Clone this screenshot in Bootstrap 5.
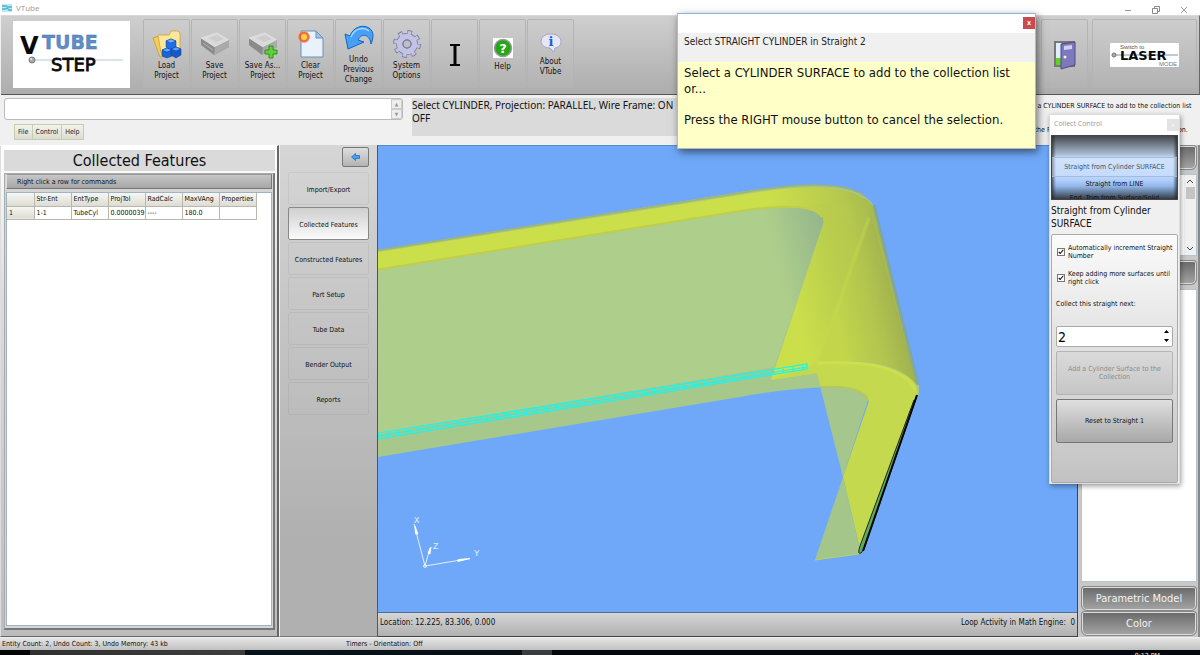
<!DOCTYPE html>
<html lang="en">
<head>
<meta charset="utf-8">
<meta name="viewport" content="width=device-width, initial-scale=1">
<title>VTube</title>
<link href="https://cdn.jsdelivr.net/npm/bootstrap@5.3.0/dist/css/bootstrap.min.css" rel="stylesheet">
<script src="https://cdn.jsdelivr.net/npm/bootstrap@5.3.0/dist/js/bootstrap.bundle.min.js"></script>
<style>
:root{--ui:"DejaVu Sans Condensed","Noto Sans",sans-serif}
body{font-family:var(--ui);font-size:7px;line-height:8px;color:#111;background:#f0f0f0}
button,input{font-family:inherit}
.app{height:100vh;overflow:hidden}
.titlebar{height:15px;background:#fff;color:#999;font:8px/15px "Open Sans",sans-serif;padding:0 2px 0 2px}
.titlebar .winbtn{border:0;background:none;width:28px;height:13px;padding:0}
.ribbon{height:80px;margin-left:1px;background:linear-gradient(#cfcfcf,#adadad);border-top:1px solid #d9d9d9;border-bottom:1px solid #555;border-right:1px solid #666;padding:3px 2px 0 12px}
.logo{width:117px;height:67px;background:#fff;margin:2px 13px 0 0}
.tool{width:47px;height:69px;border:1px solid #b4b4b4;border-radius:2px;background:linear-gradient(#cdcdcd,#b3b3b3);padding:2px 0 0;color:#111;font-size:8px;line-height:10px;margin-right:1px}
.tool svg{display:block}
.tool svg + span{margin-top:2px}
.lasercell{width:105px}
.inforow{height:50px;background:#f0f0f0}
.msgbox{width:399px;height:22px;margin:3px 0 0 4px;border:1px solid #bbb;border-radius:3px;background:#fff}
.msgbox input{border:0;width:100%;height:18px;background:transparent;font-size:8px;padding:0 4px}
.spin button{display:block;width:11px;height:10px;padding:0;border:1px solid #ccc;background:#eee;color:#999;font-size:5px;line-height:7px}
.menus{margin:4px 0 0 14px}
.menus button{height:16px;border:1px solid #c5cda9;background:linear-gradient(#f3f3ee,#dcdcd2);padding:0 3px;font-size:7px;line-height:12px;color:#222;margin-right:-1px}
.modebox{background:#dadada;height:38px;margin:3px 0 0 9px;font-family:"Noto Sans",sans-serif;font-size:10px;line-height:13px;padding-top:1px;white-space:nowrap}
.hintlabel{width:184px;padding:7px 2px 0 0;font-size:7px}
.hintlabel p{margin:0;white-space:nowrap}
.leftpanel{width:279px;border:1px solid #fff;border-left-color:#ddd;border-right:2px solid #666;border-bottom:1px solid #666;background:linear-gradient(#fff,#ddd 30%,#bcbcbc);padding:4px 2px 6px 3px}
.leftpanel h1{font-size:16px;line-height:21px;height:21px;background:#dadada;margin:0 0 2px;text-align:center;font-weight:400}
.gridbox{border:1px solid #aaa;border-right:2px solid #777;border-bottom:2px solid #777;background:#d5d5d5;padding:0 1px 2px}
.hintbar{height:15px;border:1px solid #777;border-left-color:#ddd;border-top-color:#999;background:linear-gradient(#c6c6c6,#a7a7a7);padding:3px 10px;margin-bottom:3px}
.sheet{background:#fff;border:1px solid #9fb3c5}
.sheet table{width:249px;table-layout:fixed;border-collapse:collapse;font-size:7px;line-height:8px}
.sheet th,.sheet td{height:13px;border:1px solid #b8b8b0;border-top:0;border-left:0;padding:1px 2px;font-weight:400;white-space:nowrap;overflow:hidden}
.sheet th{background:linear-gradient(#f7f7f3,#dcdcd3)}
.sidenav{width:99px;border-left:1px solid #eee;border-right:1px solid #555;border-bottom:1px solid #777;background:linear-gradient(#d6d6d6,#b0b0b0 80%,#b0b0b0);padding:2px 8px 0 8px}
.sidenav .back{width:27px;height:20px;border:1px solid #777;border-radius:2px;background:linear-gradient(#dedede,#b3b3b3);padding:0;margin-bottom:5px}
.sidenav .step{height:33px;border:1px solid #0000000d;border-radius:2px;background:transparent;padding:2px 0 0;color:#111;font-size:7px}
.sidenav .step.chosen{background:linear-gradient(#cfcfcf,#fafafa);border:1px solid #888}
.scene{background:#6fa8f8;border-top:1px solid #5a88c8;min-height:0}
.scene svg{display:block;width:100%;height:100%}
.locbar{height:25px;border-top:1px solid #4e6f9e;border-bottom:1px solid #444;background:linear-gradient(#d6d6d6,#b0b0b0);padding:4px 2px;font-size:8px;line-height:11px}
.rightcol{width:123px;border-left:1px solid #444;border-right:2px solid #888;background:#c8c8c8;padding:0 1px 1px 3px}
.sect{height:25px;border:1px solid #888;border-radius:3px 3px 6px 6px;box-shadow:inset 0 0 0 1px #ddd;background:linear-gradient(#696969,#a5a5a5);color:#f2f2f2;font:11px/20px "DejaVu Sans Condensed",sans-serif;padding:0}
.pane{background:#fff;border:1px solid #b5c4d0}
.listpane{height:82px}
.sbar{width:12px;background:#f0f0f0;color:#555}
.statusbar{height:13px;border-top:1px solid #eee;background:linear-gradient(#e6e6e6,#c0c0c0);font-size:7px;line-height:13px;padding:0 2px}
.statusbar .first{width:344px}
.taskbar{height:5px;background:linear-gradient(90deg,#050505 30px,#303030 30px,#3d3d3d 245px,#06131a 245px,#080f14 522px,#393d40 522px,#393d40 552px,#03080c 552px);color:#eee;font-size:7px;line-height:8px;padding:2px 40px 0 0;overflow:hidden}
.popup{position:absolute;top:13px;right:164px;width:359px;height:136px;border:1px solid #bcbca0;border-top-color:#8ab4e8;background:#ffffc8;box-shadow:2px 3px 8px #0008}
.popup .cap{height:19px;background:#fff}
.popup .cap button{width:12px;height:12px;margin-top:3px;border:0;background:#c84b50;color:#fff;padding:0;font:bold 7px/11px var(--ui)}
.popup .sub{height:29px;background:#f0f0f0;font-size:10px;line-height:15px;padding:1px 6px;color:#222}
.popup .msg{font-size:13px;line-height:16px;padding:3px 6px}
.popup .msg p{margin:0 0 15px}
.collect{position:absolute;top:114px;right:20px;width:131px;height:370px;background:#f0f0f0;border:1px solid #ddd;box-shadow:1px 2px 5px #0006;padding:0 1px}
.collect .cap{height:20px;margin:0 -1px;background:#fff;color:#999;font:7px/18px "Open Sans",sans-serif;padding-left:4px}
.collect .cap button{border:0;background:#e3e3e3;color:#fff;width:12px;height:12px;margin-top:4px;padding:0;font-size:6px;line-height:10px}
.drum{height:65px;border:1px solid #444;background:linear-gradient(90deg,#222a,transparent 4px,transparent calc(100% - 4px),#222a),linear-gradient(#44484f,#a9bbd0 18px,#cfe0f8 22px,#b5d2ff 43px,#94b8ea 50px,#333c48);text-align:center;line-height:14px;overflow:hidden;padding-top:21px}
.drum .picked{background:#d6e6ff66;border:1px solid #a6bbda;border-width:1px 0;line-height:18px;color:#456}
.collect h2{font-size:10px;line-height:13px;margin:4px 0 4px;font-weight:400}
.optbox{border:1px solid #aaa;border-radius:2px;background:linear-gradient(#fbfbfb,#c2c2c2);padding:9px 4px 0}
.optbox input[type=checkbox]{width:8px;height:8px;margin:4px 3px 0 1px;appearance:none;flex:none;border:1px solid #777;background:#fff}
.optbox input[type=checkbox]:checked{background:#fff url("data:image/svg+xml,%3Csvg xmlns='http://www.w3.org/2000/svg' viewBox='0 0 8 8'%3E%3Cpath d='M1 4l2 2 4-5' fill='none' stroke='%23111' stroke-width='1.5'/%3E%3C/svg%3E")}
.optbox label{font-size:7px;line-height:8px}
.optbox .nextlabel{margin:14px 0 18px}
.optbox .optrow{margin-bottom:10px}
.num{height:21px;border:1px solid #aaa;border-radius:2px;background:#fff}
.num input{border:0;background:none;width:90px;font-size:14px;line-height:18px;padding:0 1px}
.num button{display:block;border:0;background:none;height:9px;width:11px;padding:0}
.optbox .act{height:44px;border:1px solid #777;border-radius:2px;background:linear-gradient(#dfdfdf,#a8a8a8);padding:0 8px;font-size:7px;line-height:8px;color:#111}
.optbox .act:disabled{background:linear-gradient(#dadada,#c6c6c6);border-color:#b4b4b4;color:#8c8c8c}
</style>
</head>
<body>
<div class="app d-flex flex-column position-relative">
  <header class="titlebar d-flex align-items-center">
    <svg width="10" height="8" viewBox="0 0 10 8" class="me-1"><rect width="10" height="8" fill="#bfe7f4"/><path d="M0 2h4l2 1h4M0 5h3l2-1 2 2h3" stroke="#46b4d8" stroke-width="1.3" fill="none"/></svg>
    <span class="me-auto">VTube</span>
    <button class="winbtn" aria-label="Minimize"><svg width="8" height="8"><path d="M1 4.500h6" stroke="#999"/></svg></button>
    <button class="winbtn" aria-label="Restore"><svg width="8" height="8" fill="none" stroke="#888"><path d="M.5 2.500h5v5h-5zM2.500 2V.5h5v5H6"/></svg></button>
    <button class="winbtn" aria-label="Close"><svg width="8" height="8"><path d="M1 1l6 6M7 1L1 7" stroke="#999"/></svg></button>
  </header>

  <nav class="ribbon d-flex align-items-start">
    <div class="logo flex-shrink-0">
      <svg width="117" height="67" viewBox="0 0 117 67" role="img" aria-label="VTube Step">
        <path d="M20 39h90" stroke="#b5c9dd"/>
        <text x="7" y="33" font-family="DejaVu Sans" font-weight="bold" font-size="24" fill="#080808">V</text>
        <text x="29" y="28" font-family="DejaVu Sans" font-weight="bold" font-size="19" fill="#5f8dc8" stroke="#4673ad" stroke-width=".4">TUBE</text>
        <text x="38" y="50" font-family="DejaVu Sans" font-size="18" fill="#0b0b0b" stroke="#0b0b0b" stroke-width=".8">STEP</text>
        <circle cx="19" cy="39" r="3" fill="#aaa" stroke="#777"/><circle cx="18" cy="38" r="1" fill="#eee"/>
      </svg>
    </div>
    <button class="tool d-flex flex-column align-items-center justify-content-center">
      <svg width="30" height="30" viewBox="0 0 30 30"><path d="M1 9l6-2 2 1 9-2 3 21-13 1z" fill="#f1cf5c" stroke="#c99b2e" stroke-width=".8"/><path d="M6 6h11l2-4h7l2 2v20H9z" fill="#fbe79a" stroke="#cda23a" stroke-width=".8"/><g stroke="#0a3d98" stroke-width=".5"><path d="M14 12l5-2 5 2v6l-5 3-5-3z" fill="#1e6fe8"/><path d="M14 12l5-2 5 2-5 2z" fill="#6fb0ff"/><path d="M10 21l5-2 5 2v6l-5 2-5-2z" fill="#1a63d8"/><path d="M10 21l5-2 5 2-5 2z" fill="#62a6ff"/><path d="M19 20l5-2 5 2v6l-5 3-5-3z" fill="#1659c9"/><path d="M19 20l5-2 5 2-5 2z" fill="#5aa0fc"/></g></svg>
      <span>Load<br>Project</span></button>
    <button class="tool d-flex flex-column align-items-center justify-content-center">
      <svg width="30" height="30" viewBox="0 0 30 30"><path d="M1 9L17 4l12 7v7L14 26 1 16z" fill="#8a8a8a"/><path d="M1 9L17 4l12 7-14 7z" fill="#dadada" stroke="#f4f4f4" stroke-width=".6"/><path d="M15 18l14-7v7L14 26z" fill="#aaa"/><path d="M8 9l9-3 7 4-8 3z" fill="#cdcdcd"/><path d="M3 14l10 7" stroke="#b5b5b5"/></svg>
      <span>Save<br>Project</span></button>
    <button class="tool d-flex flex-column align-items-center justify-content-center">
      <svg width="30" height="30" viewBox="0 0 30 30"><path d="M1 9L17 4l12 7v7L14 26 1 16z" fill="#8a8a8a"/><path d="M1 9L17 4l12 7-14 7z" fill="#dadada" stroke="#f4f4f4" stroke-width=".6"/><path d="M15 18l14-7v7L14 26z" fill="#aaa"/><path d="M8 9l9-3 7 4-8 3z" fill="#cdcdcd"/><path d="M21 17h4v4h4v4h-4v4h-4v-4h-4v-4h4z" fill="#5fd03c" stroke="#2b9417"/></svg>
      <span>Save As...<br>Project</span></button>
    <button class="tool d-flex flex-column align-items-center justify-content-center">
      <svg width="30" height="30" viewBox="0 0 30 30"><path d="M5 2h15l7 7v19H5z" fill="#e9f2fa" stroke="#6a91b5"/><path d="M20 2v7h7z" fill="#9dc3e4" stroke="#6a91b5"/><circle cx="8" cy="8" r="5.500" fill="#f4552f" opacity=".85" stroke="#ff8c60" stroke-dasharray="2 1.500"/><circle cx="8" cy="8" r="3" fill="#ffd93c"/></svg>
      <span>Clear<br>Project</span></button>
    <button class="tool d-flex flex-column align-items-center justify-content-center">
      <svg width="30" height="28" viewBox="0 1 30 28"><path d="M1 10l5 2C9 3 19 0 25 4c6 4 4 11 2 16C26 11 18 8 14 16l6 2L4 25z" fill="#46a0f5" stroke="#1764bd"/><path d="M7 13C10 5 19 2 25 7" stroke="#a9d8ff" stroke-width="1.500" fill="none"/></svg>
      <span>Undo<br>Previous<br>Change</span></button>
    <button class="tool d-flex flex-column align-items-center justify-content-center">
      <svg width="30" height="30" viewBox="0 0 30 30"><g fill="none" stroke="#7c7caa"><circle cx="15" cy="15" r="11" stroke-width="6" stroke-dasharray="4.200 4.440"/><circle cx="15" cy="15" r="7.500" stroke-width="7"/></g><g fill="none" stroke="#c3c3e4"><circle cx="15" cy="15" r="11" stroke-width="4" stroke-dasharray="3.200 5.440" stroke-dashoffset="-.5"/><circle cx="15" cy="15" r="7.500" stroke-width="5.500"/></g><circle cx="15" cy="15" r="4" fill="#c0c0c0" stroke="#7777a0"/></svg>
      <span>System<br>Options</span></button>
    <button class="tool d-flex flex-column align-items-center justify-content-center" aria-label="Cursor">
      <svg width="10" height="22" viewBox="0 0 10 22"><path d="M0 1h10M0 21h10" stroke="#050505" stroke-width="2"/><path d="M5 1v20" stroke="#050505" stroke-width="3"/></svg></button>
    <button class="tool d-flex flex-column align-items-center justify-content-center">
      <svg width="20" height="20" viewBox="0 0 20 20" class="mb-1"><rect width="20" height="20" fill="#fff"/><circle cx="10" cy="10" r="8.500" fill="#25a818" stroke="#999" stroke-width="1.500"/><text x="10" y="15" text-anchor="middle" font-family="DejaVu Sans" font-weight="bold" font-size="13" fill="#fff">?</text></svg>
      <span class="mt-0">Help</span></button>
    <button class="tool d-flex flex-column align-items-center justify-content-center">
      <svg width="22" height="20" viewBox="0 0 22 20" class="mb-1"><path d="M11 1c12 0 13 13 4 14l-1 4-4-4C-2 15-2 1 11 1z" fill="#e6e6f7" stroke="#a5a5c8"/><text x="11" y="13" text-anchor="middle" font-family="DejaVu Serif" font-weight="bold" font-size="13" fill="#1764d2">i</text></svg>
      <span class="mt-0">About<br>VTube</span></button>
    <button class="tool d-flex align-items-center justify-content-center ms-auto me-1" aria-label="Exit">
      <svg width="24" height="30" viewBox="0 0 24 30"><path d="M1 1h21v26H1z" fill="#777"/><path d="M3 3h6v22H3z" fill="#dff0fb"/><path d="M3 18h6v7H3z" fill="#62d024"/><path d="M8 4l14-2v23L8 29z" fill="#7d79bd" stroke="#4e4a86"/><path d="M11 6l8-1v4l-8 1z" fill="#d2d0f0"/><circle cx="12" cy="17" r="1.500" fill="#eee"/></svg></button>
    <button class="tool lasercell d-flex align-items-center justify-content-center m-0" aria-label="Switch to laser mode">
      <svg width="69" height="24" viewBox="0 0 69 24"><rect width="69" height="24" rx="1" fill="#fff"/><path d="M4 12h64" stroke="#7d95ab"/><text x="10" y="6" font-size="6" fill="#555" font-family="Liberation Sans">Switch to</text><text x="10" y="17" font-size="13" font-weight="bold" font-family="DejaVu Sans" fill="#0a0a0a">LASER</text><text x="49" y="23" font-size="6" fill="#777" font-family="Liberation Sans">MODE</text><circle cx="4" cy="12" r="2" fill="#aaa" stroke="#777"/></svg></button>
  </nav>

  <section class="inforow d-flex">
    <div>
      <div class="msgbox d-flex"><input type="text" aria-label="Message"><span class="spin"><button aria-label="Up">▲</button><button aria-label="Down">▼</button></span></div>
      <div class="menus d-flex"><button>File</button><button>Control</button><button>Help</button></div>
    </div>
    <div class="modebox flex-fill">Select CYLINDER, Projection: PARALLEL, Wire Frame: ON<br>OFF</div>
    <div class="hintlabel"><p>Select a CYLINDER SURFACE to add to the collection list</p><p>or...</p><p>&nbsp;</p><p>Press the RIGHT mouse button to cancel the selection.</p></div>
  </section>

  <main class="d-flex flex-fill" style="min-height:0">
    <section class="leftpanel d-flex flex-column flex-shrink-0">
      <h1>Collected Features</h1>
      <div class="gridbox d-flex flex-column flex-fill">
        <div class="hintbar">Right click a row for commands</div>
        <div class="sheet flex-fill">
          <table>
            <colgroup><col style="width:27px"><col span="6" style="width:37px"></colgroup>
            <thead><tr><th></th><th>Str-Ent</th><th>EntType</th><th>ProjTol</th><th>RadCalc</th><th>MaxVAng</th><th>Properties</th></tr></thead>
            <tbody><tr><th scope="row">1</th><td>1-1</td><td>TubeCyl</td><td>0.0000039</td><td>----</td><td>180.0</td><td></td></tr></tbody>
          </table>
        </div>
      </div>
    </section>
    <nav class="sidenav d-flex flex-column flex-shrink-0">
      <button class="back align-self-end" aria-label="Back"><svg width="9" height="8" viewBox="0 0 9 8"><path d="M.5 4l4-3.500V2.500h4v3h-4v2z" fill="#48a0f0" stroke="#1a62b8" stroke-width=".7"/></svg></button>
      <div class="d-grid" style="gap:2px">
        <button class="step">Import/Export</button><button class="step chosen">Collected Features</button><button class="step">Constructed Features</button><button class="step">Part Setup</button><button class="step">Tube Data</button><button class="step">Bender Output</button><button class="step">Reports</button>
      </div>
    </nav>
    <section class="d-flex flex-column flex-fill" style="min-width:0">
      <div class="scene flex-fill">
        <svg viewBox="378 146 699 466" preserveAspectRatio="xMidYMid slice" role="img" aria-label="Tube model">
          <defs>
            <linearGradient id="bend" x1="790" y1="285" x2="902" y2="258" gradientUnits="userSpaceOnUse"><stop offset="0" stop-color="#cbdf4b"/><stop offset=".45" stop-color="#b9cc4d"/><stop offset=".6" stop-color="#b7ca4e"/><stop offset="1" stop-color="#9fb04f"/></linearGradient>
            <linearGradient id="bend2" x1="835" y1="310" x2="908" y2="293" gradientUnits="userSpaceOnUse"><stop offset="0" stop-color="#c2d54b"/><stop offset=".5" stop-color="#b2c44e"/><stop offset="1" stop-color="#98aa50"/></linearGradient>
            <linearGradient id="sheet" x1="770" y1="240" x2="825" y2="227" gradientUnits="userSpaceOnUse"><stop offset="0" stop-color="#aecf8b"/><stop offset="1" stop-color="#94b68c"/></linearGradient>
            <linearGradient id="rim" x1="770" y1="0" x2="875" y2="0" gradientUnits="userSpaceOnUse"><stop offset="0" stop-color="#cbdf4b"/><stop offset=".6" stop-color="#b9cb4d"/><stop offset="1" stop-color="#a6b84e"/></linearGradient>
          </defs>
          <path d="M378 250L740 192Q840 177 864 196Q872 201 875 209L919 386V395L869 402Q864 388 830 387Q790 388 740 397L378 457z" fill="#a6c88a"/>
          <path d="M378 269L740 212Q824 198 824 222L774 367L378 434z" fill="url(#sheet)"/>
          <path d="M378 252L740 195Q838 178 864 199Q870 202 873 208L870 222L823 225Q828 206 785 206Q760 207 740 211L378 269z" fill="url(#rim)"/>
          <path d="M378 250.500L740 193Q838 176 864 196" fill="none" stroke="#a2b665" stroke-width="1.500"/>
          <path d="M378 269.500L740 211Q812 200 822 217" fill="none" stroke="#c0cf47" stroke-width="2"/>
          <path d="M824 222Q823 209 806 206L865 198Q871 202 874 209L917 385Q900 364 860 361L815 363V373L771 380z" fill="url(#bend)"/>
          <path d="M871 214L917 385Q900 362 850 361L817 363z" fill="url(#bend2)"/>
          <path d="M869 218L817 363" stroke="#c8da4b" stroke-width="4" opacity=".4"/>
          <path d="M874 205L918 385" stroke="#7da39a" stroke-width="3" opacity=".8"/>
          <path d="M771 380L817 363Q870 358 897 371Q920 381 917 395L860 549L843 477L869 401Q865 389 830 387L820 387L817 373z" fill="#c5d94f"/>
          <path d="M817 363Q873 360 897 373Q913 381 915 390" stroke="#d0e24b" stroke-width="3" fill="none" opacity=".7"/>
          <path d="M817 374L821 387Q862 385 868 400L843 477z" fill="#a5c68c"/>
          <path d="M821 387Q862 385 868 400" fill="none" stroke="#b6c75b" stroke-width="2"/>
          <path d="M843 477L860 550L859 554L815 560z" fill="#a4c68b"/>
          <path d="M815 560L859 554" stroke="#b9d06b" stroke-width="1"/>
          <path d="M914 400L860 546Q857 555 861 553L864 549L917 396" fill="#59ad62" stroke="#262608" stroke-width="1"/><path d="M917 395L863 551" stroke="#050505" stroke-width="2"/>
          <path d="M378 433L807 364V369L378 439M378 436L807 367" fill="none" stroke="#0ff8f8" stroke-width="1.200"/><path d="M378 436L807 367" stroke="#0ff8f8" stroke-width="4" stroke-dasharray="1 9"/>
          <g stroke="#fff" fill="#fff" stroke-width=".8"><path d="M425 566L414 524M425 566L430 548M425 566L470 558.500"/><path d="M415 526l3 8h-2.500zM431 547l-3 6 2 1zM470 558.500l-12 1v2z"/><circle cx="425" cy="566" r="1.500" fill="none"/></g>
          <g fill="#e6f0ff" font-family="Liberation Mono" font-size="9"><text x="414" y="523">X</text><text x="433" y="549">Z</text><text x="474" y="556">Y</text></g>
        </svg>
      </div>
      <div class="locbar d-flex justify-content-between"><span>Location: 12.225, 83.306, 0.000</span><span>Loop Activity in Math Engine:&nbsp; 0</span></div>
    </section>
    <aside class="rightcol d-flex flex-column flex-shrink-0">
      <button class="sect mb-1" aria-label="Section 1"></button>
      <div class="pane listpane d-flex justify-content-end"><div class="sbar d-flex flex-column align-items-center py-1"><svg width="6" height="4"><path d="M0 4l3-3 3 3" stroke="#444" fill="none"/></svg><svg width="9" height="12" class="mt-1 mb-auto"><rect width="9" height="12" fill="#c4c4c4"/></svg><svg width="6" height="4"><path d="M0 0l3 3 3-3" stroke="#444" fill="none"/></svg></div></div>
      <button class="sect mt-1 mb-1" aria-label="Section 2"></button>
      <div class="pane flex-fill"></div>
      <button class="sect mt-1">Parametric Model</button>
      <button class="sect">Color</button>
    </aside>
  </main>

  <footer class="statusbar d-flex"><span class="first">Entity Count: 2, Undo Count: 3, Undo Memory: 43 kb</span><span>Timers - Orientation: Off</span></footer>
  <div class="taskbar d-flex justify-content-end"><span>9:12 PM</span></div>

  <div class="popup" role="dialog" aria-label="Select cylinder">
    <div class="cap d-flex justify-content-end"><button aria-label="Close">x</button></div>
    <div class="sub">Select STRAIGHT CYLINDER in Straight 2</div>
    <div class="msg"><p>Select a CYLINDER SURFACE to add to the collection list<br>or...</p><p>Press the RIGHT mouse button to cancel the selection.</p></div>
  </div>

  <div class="collect d-flex flex-column" role="dialog" aria-label="Collect Control">
    <div class="cap d-flex justify-content-between"><span>Collect Control</span><button aria-label="Close">x</button></div>
    <div class="drum"><div class="picked">Straight from Cylinder SURFACE</div><div>Straight from LINE</div><div>End, Trim from Surface/Solid</div></div>
    <h2>Straight from Cylinder<br>SURFACE</h2>
    <div class="optbox flex-fill">
      <div class="optrow d-flex"><input type="checkbox" id="auto" checked><label for="auto">Automatically increment Straight Number</label></div>
      <div class="optrow d-flex"><input type="checkbox" id="keep" checked><label for="keep">Keep adding more surfaces until right click</label></div>
      <label for="next" class="nextlabel d-block">Collect this straight next:</label>
      <div class="num d-flex justify-content-between mb-1"><input id="next" type="text" value="2"><span><button aria-label="Increase"><svg width="5" height="3" class="d-block mx-auto"><path d="M0 3l2.500-3L5 3z"/></svg></button><button aria-label="Decrease"><svg width="5" height="3" class="d-block mx-auto"><path d="M0 0l2.500 3L5 0z"/></svg></button></span></div>
      <button class="act w-100 mb-1" disabled>Add a Cylinder Surface to the Collection</button>
      <button class="act w-100">Reset to Straight 1</button>
    </div>
  </div>
</div>
</body>
</html>
